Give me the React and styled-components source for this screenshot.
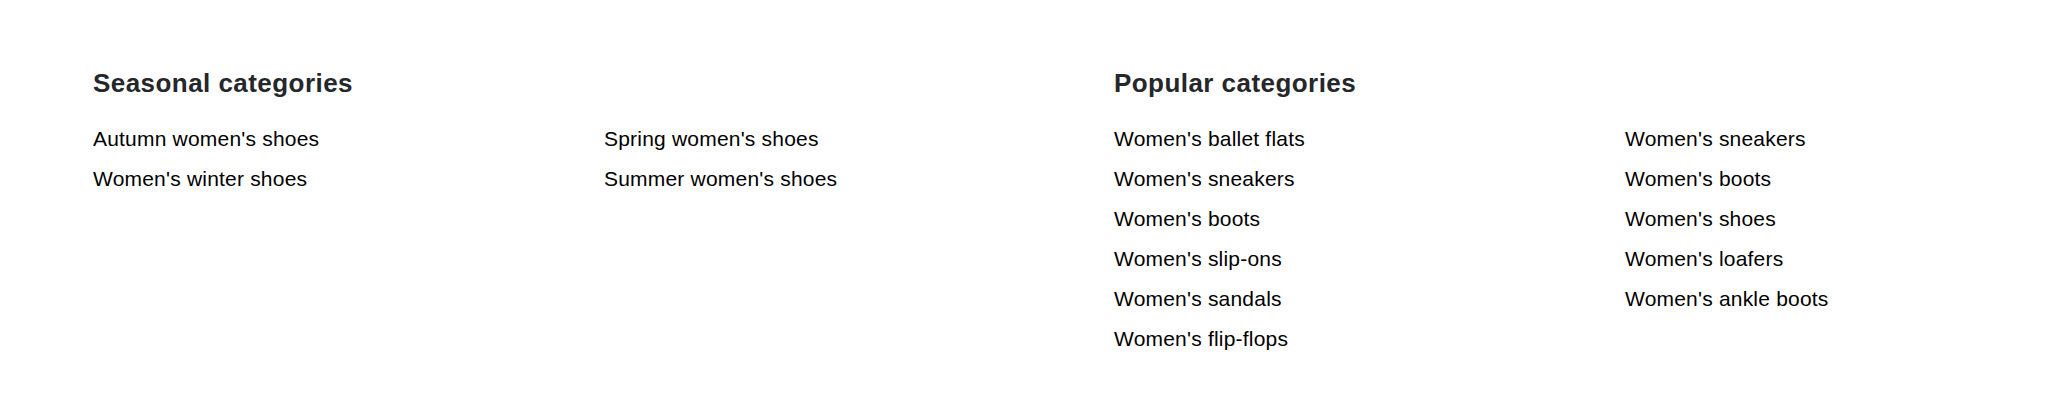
import React from "react";
import styled, { createGlobalStyle } from "styled-components";

const GlobalStyle = createGlobalStyle`
  html, body {
    margin: 0;
    padding: 0;
    background: #ffffff;
  }
  body {
    font-family: "Liberation Sans", Arial, Helvetica, sans-serif;
    overflow-x: hidden;
  }
`;

const Page = styled.div`
  display: grid;
  grid-template-columns: 1021px 1fr;
  padding: 68px 0 50px 93px;
  background: #ffffff;
`;

const Section = styled.section`
  display: flex;
  flex-direction: column;
  min-width: 0;
`;

const Heading = styled.h2`
  margin: 0 0 21px 0;
  font-size: 26px;
  line-height: 30px;
  font-weight: 700;
  letter-spacing: 0.45px;
  color: #25272b;
`;

const Columns = styled.div`
  display: grid;
  grid-template-columns: 511px 1fr;
`;

const LinkList = styled.ul`
  list-style: none;
  margin: 0;
  padding: 0;
  display: flex;
  flex-direction: column;
`;

const LinkItem = styled.li`
  font-size: 21px;
  line-height: 40px;
  letter-spacing: 0.2px;
  white-space: nowrap;
`;

const Link = styled.a`
  color: #000000;
  text-decoration: none;
`;

const sections = [
  {
    title: "Seasonal categories",
    columns: [
      ["Autumn women's shoes", "Women's winter shoes"],
      ["Spring women's shoes", "Summer women's shoes"],
    ],
  },
  {
    title: "Popular categories",
    columns: [
      [
        "Women's ballet flats",
        "Women's sneakers",
        "Women's boots",
        "Women's slip-ons",
        "Women's sandals",
        "Women's flip-flops",
      ],
      [
        "Women's sneakers",
        "Women's boots",
        "Women's shoes",
        "Women's loafers",
        "Women's ankle boots",
      ],
    ],
  },
];

export default function App() {
  return (
    <>
      <GlobalStyle />
      <Page>
        {sections.map((s) => (
          <Section key={s.title}>
            <Heading>{s.title}</Heading>
            <Columns>
              {s.columns.map((col, ci) => (
                <LinkList key={ci}>
                  {col.map((item) => (
                    <LinkItem key={item}>
                      <Link href="#">{item}</Link>
                    </LinkItem>
                  ))}
                </LinkList>
              ))}
            </Columns>
          </Section>
        ))}
      </Page>
    </>
  );
}
